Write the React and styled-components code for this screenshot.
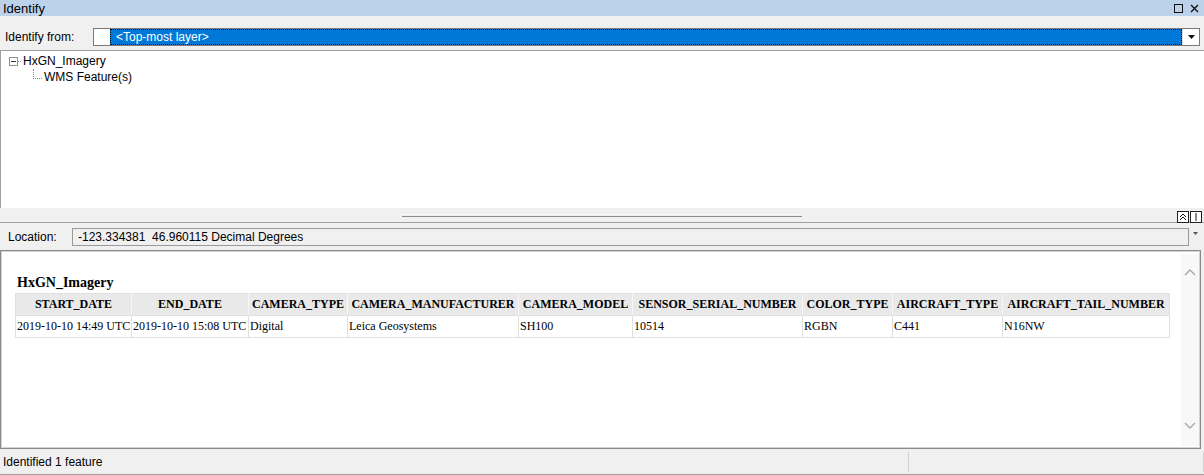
import React from 'react'
import styled, { createGlobalStyle } from 'styled-components'

const GlobalStyle = createGlobalStyle`
  html, body {
    margin: 0;
    padding: 0;
    background: #f0f0f0;
  }
  body {
    font-family: "Liberation Sans", Arial, sans-serif;
    font-size: 12px;
    color: #000;
    overflow: hidden;
  }
`

const Window = styled.div`
  width: 1204px;
  height: 475px;
  display: flex;
  flex-direction: column;
  background: #f0f0f0;
`

const TitleBar = styled.div`
  height: 16px;
  flex: none;
  display: flex;
  align-items: center;
  justify-content: space-between;
  padding: 0 5px 0 3px;
  background: #bbd2ea;
  font-size: 13px;
`

const TitleButtons = styled.div`
  display: flex;
  align-items: center;
  gap: 7px;
`

const Toolbar = styled.div`
  height: 34px;
  flex: none;
  display: flex;
  align-items: flex-start;
  padding: 12px 4px 0 5px;
  box-sizing: border-box;
`

const FieldLabel = styled.div`
  width: ${p => p.$width}px;
  flex: none;
  line-height: 18px;
`

const Combo = styled.div`
  flex: 1;
  height: 18px;
  display: flex;
  border: 1px solid #7a7a7a;
  box-sizing: border-box;
  background: #fff;
`

const ComboBlank = styled.div`
  width: 16px;
  flex: none;
`

const ComboValue = styled.div`
  flex: 1;
  background: #0078d7;
  color: #fff;
  outline: 1px dotted #111;
  outline-offset: -1px;
  padding-left: 6px;
  line-height: 16px;
`

const ComboButton = styled.div`
  width: 16px;
  flex: none;
  display: flex;
  align-items: center;
  justify-content: center;
  border-left: 1px solid #e0e0e0;
`

const TreePanel = styled.div`
  height: 158px;
  flex: none;
  background: #fff;
  border-top: 1px solid #a0a0a0;
  border-left: 1px solid #a0a0a0;
  box-sizing: border-box;
  padding: 2px 0 0 8px;
`

const TreeRow = styled.div`
  display: flex;
  align-items: center;
  height: 16px;
  padding-left: ${p => p.$indent}px;
`

const Expander = styled.div`
  width: 9px;
  height: 9px;
  flex: none;
  box-sizing: border-box;
  border: 1px solid #919191;
  display: flex;
  align-items: center;
  justify-content: center;
  &::after {
    content: "";
    width: 5px;
    height: 1px;
    background: #333;
  }
`

const DotLine = styled.div`
  width: ${p => p.$width}px;
  flex: none;
  border-top: 1px dotted #8a8a8a;
  margin-right: 2px;
`

const Elbow = styled.div`
  width: 8px;
  height: 9px;
  flex: none;
  align-self: flex-start;
  border-left: 1px dotted #8a8a8a;
  border-bottom: 1px dotted #8a8a8a;
  margin-right: 2px;
`

const Splitter = styled.div`
  height: 15px;
  flex: none;
  display: flex;
  align-items: center;
  border-bottom: 1px solid #a0a0a0;
  box-sizing: border-box;
`

const SplitSide = styled.div`
  flex: 1;
  display: flex;
  justify-content: flex-end;
  padding-right: 2px;
  padding-top: 3px;
`

const Grip = styled.div`
  width: 400px;
  height: 3px;
  flex: none;
  border-top: 1px solid #fafafa;
  border-bottom: 1px solid #8c8c8c;
  box-sizing: border-box;
`

const PinButton = styled.div`
  width: 10px;
  height: 10px;
  border: 1px solid #222;
  background: #fff;
  display: flex;
  align-items: center;
  justify-content: center;
  margin-left: 1px;
`

const LocationRow = styled.div`
  height: 27px;
  flex: none;
  display: flex;
  align-items: flex-start;
  padding: 5px 3px 0 8px;
  box-sizing: border-box;
`

const LocationBox = styled.div`
  flex: 1;
  height: 18px;
  border: 1px solid #9a9a9a;
  box-sizing: border-box;
  background: #f0f0f0;
  padding-left: 5px;
  line-height: 16px;
`

const SmallArrow = styled.div`
  width: 12px;
  flex: none;
  display: flex;
  justify-content: center;
  padding-top: 4px;
`

const Results = styled.div`
  height: 199px;
  flex: none;
  display: flex;
  margin-right: 3px;
  background: #fff;
  border: 1px solid #8a8a8a;
  box-shadow: inset 1px 1px 0 #d4d4d4, inset -1px -1px 0 #d4d4d4;
  padding: 3px 1px 2px 3px;
  box-sizing: border-box;
`

const ReportBody = styled.div`
  flex: 1;
  padding: 21px 0 0 11px;
  font-family: "Liberation Serif", "Times New Roman", serif;
`

const LayerName = styled.div`
  font-weight: bold;
  font-size: 14px;
  line-height: 16px;
  margin-bottom: 2px;
  padding-left: 2px;
`

const Table = styled.table`
  width: 1153px;
  border-collapse: separate;
  border-spacing: 0;
  table-layout: fixed;
  border: 1px solid #e0e0e0;
  font-size: 12px;
`

const HeadCell = styled.th`
  height: 21px;
  padding: 0 1px;
  background: #e9e9e9;
  font-weight: bold;
  text-align: center;
  white-space: nowrap;
  overflow: hidden;
  border-right: 1px solid #f7f7f7;
  &:last-child { border-right: none; }
`

const Cell = styled.td`
  height: 21px;
  padding: 0 1px;
  white-space: nowrap;
  overflow: hidden;
  border-top: 1px solid #e0e0e0;
  border-right: 1px solid #e0e0e0;
  &:last-child { border-right: none; }
`

const ScrollTrack = styled.div`
  width: 18px;
  flex: none;
  background: #f8f8f8;
  display: flex;
  flex-direction: column;
  align-items: center;
  justify-content: space-between;
  padding: 15px 0 17px;
  box-sizing: border-box;
`

const StatusBar = styled.div`
  flex: 1;
  display: flex;
  align-items: stretch;
  border-bottom: 1px solid #a0a0a0;
  padding-top: 3px;
  box-sizing: border-box;
`

const StatusPane = styled.div`
  width: ${p => p.$width ? `${p.$width}px` : 'auto'};
  flex: ${p => p.$width ? 'none' : 1};
  border-right: 1px solid #d0d0d0;
  padding-left: 3px;
  display: flex;
  align-items: center;
  margin-bottom: 2px;
`

const columns = [
  ['START_DATE', 116],
  ['END_DATE', 117],
  ['CAMERA_TYPE', 99],
  ['CAMERA_MANUFACTURER', 171],
  ['CAMERA_MODEL', 114],
  ['SENSOR_SERIAL_NUMBER', 170],
  ['COLOR_TYPE', 90],
  ['AIRCRAFT_TYPE', 110],
  ['AIRCRAFT_TAIL_NUMBER', 166],
]

const row = [
  '2019-10-10 14:49 UTC',
  '2019-10-10 15:08 UTC',
  'Digital',
  'Leica Geosystems',
  'SH100',
  '10514',
  'RGBN',
  'C441',
  'N16NW',
]

const Chevron = ({ up }) => (
  <svg width="12" height="7" viewBox="0 0 12 7">
    <path d={up ? 'M1 6 L6 1 L11 6' : 'M1 1 L6 6 L11 1'} fill="none" stroke="#a6a6a6" strokeWidth="1.3" />
  </svg>
)

export default function App() {
  return (
    <Window>
      <GlobalStyle />
      <TitleBar>
        <span>Identify</span>
        <TitleButtons>
          <svg width="9" height="9" viewBox="0 0 9 9">
            <rect x="0.5" y="0.5" width="8" height="8" fill="none" stroke="#111" />
          </svg>
          <svg width="9" height="9" viewBox="0 0 9 9">
            <path d="M1 1 L8 8 M8 1 L1 8" stroke="#111" strokeWidth="1.4" />
          </svg>
        </TitleButtons>
      </TitleBar>

      <Toolbar>
        <FieldLabel $width={88}>Identify from:</FieldLabel>
        <Combo>
          <ComboBlank />
          <ComboValue>&lt;Top-most layer&gt;</ComboValue>
          <ComboButton>
            <svg width="7" height="4" viewBox="0 0 7 4">
              <path d="M0 0 H7 L3.5 4 Z" fill="#111" />
            </svg>
          </ComboButton>
        </Combo>
      </Toolbar>

      <TreePanel>
        <TreeRow $indent={0}>
          <Expander />
          <DotLine $width={3} />
          <span>HxGN_Imagery</span>
        </TreeRow>
        <TreeRow $indent={24}>
          <Elbow />
          <span>WMS Feature(s)</span>
        </TreeRow>
      </TreePanel>

      <Splitter>
        <SplitSide />
        <Grip />
        <SplitSide>
          <PinButton>
            <svg width="8" height="8" viewBox="0 0 8 8">
              <path d="M1 4 L4 1 L7 4 M1 7 L4 4 L7 7" fill="none" stroke="#111" strokeWidth="1" />
            </svg>
          </PinButton>
          <PinButton>
            <svg width="8" height="8" viewBox="0 0 8 8">
              <path d="M4 0 V8" stroke="#111" strokeWidth="1" />
            </svg>
          </PinButton>
        </SplitSide>
      </Splitter>

      <LocationRow>
        <FieldLabel $width={64}>Location:</FieldLabel>
        <LocationBox>-123.334381&nbsp;&nbsp;46.960115 Decimal Degrees</LocationBox>
        <SmallArrow>
          <svg width="5" height="3" viewBox="0 0 5 3">
            <path d="M0 0 H5 L2.5 3 Z" fill="#555" />
          </svg>
        </SmallArrow>
      </LocationRow>

      <Results>
        <ReportBody>
          <LayerName>HxGN_Imagery</LayerName>
          <Table>
            <colgroup>
              {columns.map(([name, w]) => (
                <col key={name} style={{ width: w }} />
              ))}
            </colgroup>
            <thead>
              <tr>
                {columns.map(([name]) => (
                  <HeadCell key={name}>{name}</HeadCell>
                ))}
              </tr>
            </thead>
            <tbody>
              <tr>
                {row.map((v, i) => (
                  <Cell key={i}>{v}</Cell>
                ))}
              </tr>
            </tbody>
          </Table>
        </ReportBody>
        <ScrollTrack>
          <Chevron up />
          <Chevron />
        </ScrollTrack>
      </Results>

      <StatusBar>
        <StatusPane $width={905}>Identified 1 feature</StatusPane>
        <StatusPane />
      </StatusBar>
    </Window>
  )
}
